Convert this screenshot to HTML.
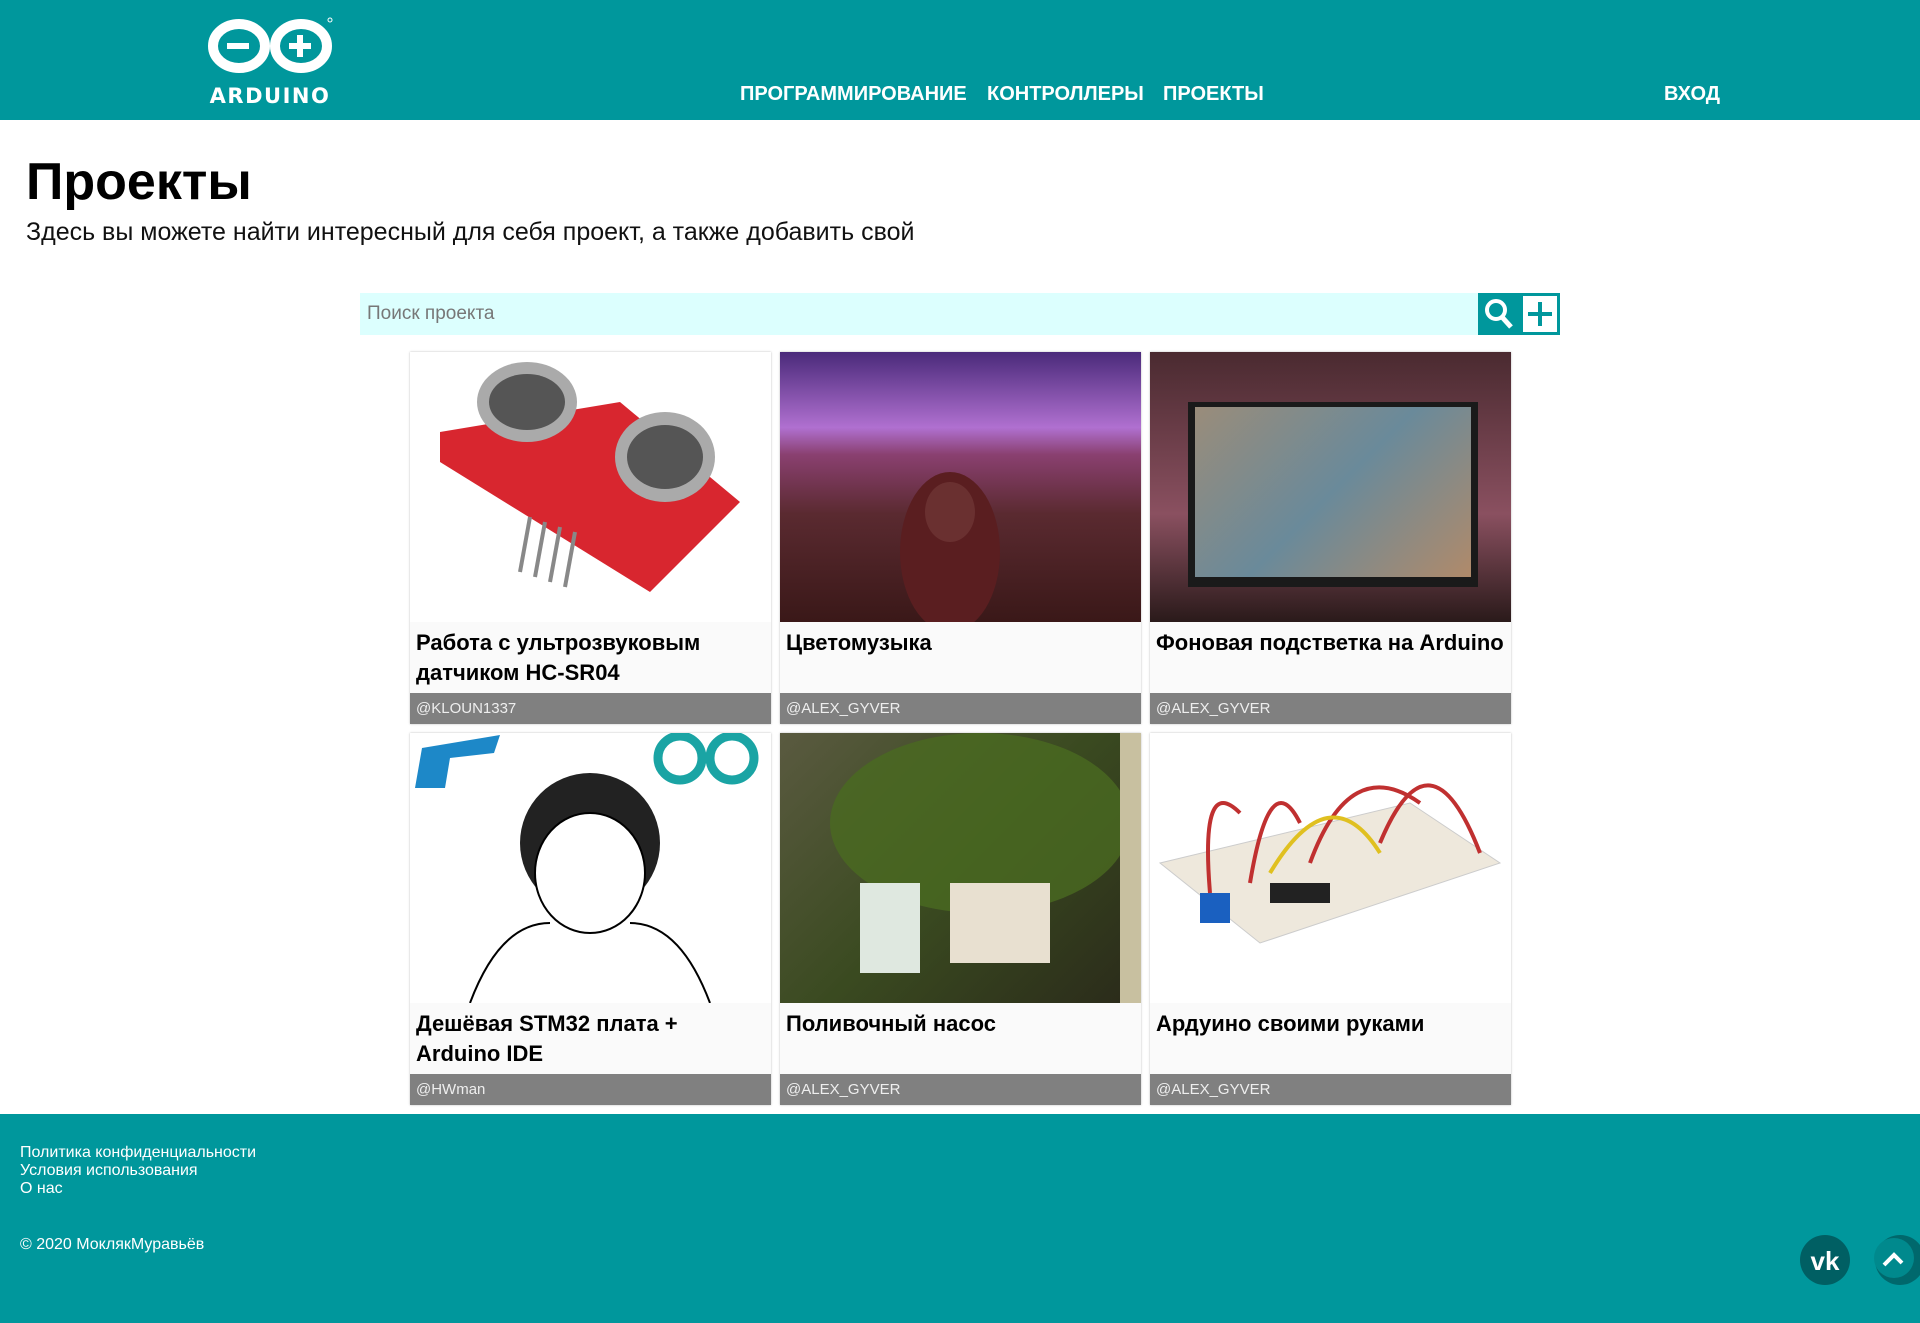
<!DOCTYPE html>
<html><head><meta charset="utf-8"><style>
*{margin:0;padding:0;box-sizing:border-box}
body{width:1920px;height:1323px;position:relative;background:#fff;font-family:"Liberation Sans","DejaVu Sans",sans-serif;overflow:hidden}
.hdr{position:absolute;left:0;top:0;width:1920px;height:120px;background:#00979c}
.nav{position:absolute;top:83px;color:#fff;font-weight:bold;font-size:20px;white-space:nowrap}
h1{position:absolute;left:26px;top:152px;font-size:52px;font-weight:bold;font-family:"Liberation Sans",sans-serif}
.sub{position:absolute;left:26px;top:218px;font-size:25px;font-family:"Liberation Sans",sans-serif;color:#111}
.search{position:absolute;left:360px;top:293px;width:1118px;height:42px;background:#dcfffe;color:#777;font-size:19px;padding:10px 7px}
.sb{position:absolute;left:1478px;top:293px;width:42px;height:42px;background:#00979c}
.pb{position:absolute;left:1520px;top:293px;width:40px;height:42px;background:#fff;border:3px solid #00979c}
.card{position:absolute;width:361px;height:372px;background:#fafafa;box-shadow:0 0 2px #bbb}
.card .img{position:absolute;left:0;top:0;width:361px;height:270px;overflow:hidden}
.card .t{position:absolute;left:6px;top:276px;width:355px;font-size:22px;line-height:30px;font-weight:bold;font-family:"Liberation Sans",sans-serif;color:#000}
.card .a{position:absolute;left:0;top:341px;width:361px;height:31px;background:#808080;color:#eee;font-size:15px;padding:7px 6px;font-family:"Liberation Sans",sans-serif}
.ftr{position:absolute;left:0;top:1114px;width:1920px;height:209px;background:#00979c;color:#fff;font-size:16px}
.ftr div{position:absolute;left:20px}
</style></head><body>
<div class="hdr">
<svg style="position:absolute;left:200px;top:10px" width="140" height="100" viewBox="0 0 140 100">
<ellipse cx="39" cy="36" rx="26" ry="22" fill="none" stroke="#fff" stroke-width="10"/>
<ellipse cx="101" cy="36" rx="26" ry="22" fill="none" stroke="#fff" stroke-width="10"/>
<rect x="27" y="33" width="22" height="6" fill="#fff"/>
<rect x="89" y="33" width="22" height="6" fill="#fff"/><rect x="97" y="25" width="6" height="22" fill="#fff"/>
<circle cx="130" cy="10" r="2" fill="none" stroke="#fff"/>
<text x="70" y="93" text-anchor="middle" fill="#fff" font-family="DejaVu Sans,sans-serif" font-weight="bold" font-size="21" letter-spacing="1.5">ARDUINO</text>
</svg>
<div class="nav" style="left:740px">ПРОГРАММИРОВАНИЕ</div>
<div class="nav" style="left:987px">КОНТРОЛЛЕРЫ</div>
<div class="nav" style="left:1163px">ПРОЕКТЫ</div>
<div class="nav" style="left:1664px">ВХОД</div>
</div>
<h1>Проекты</h1>
<div class="sub">Здесь вы можете найти интересный для себя проект, а также добавить свой</div>
<div class="search">Поиск проекта</div>
<div class="sb"><svg width="42" height="42"><circle cx="18" cy="17" r="9" fill="none" stroke="#fff" stroke-width="4"/><line x1="24" y1="24" x2="33" y2="34" stroke="#fff" stroke-width="5"/></svg></div>
<div class="pb"><svg width="34" height="36"><rect x="15" y="6" width="4" height="24" fill="#00979c"/><rect x="5" y="16" width="24" height="4" fill="#00979c"/></svg></div>

<div class="card" style="left:410px;top:352px"><div class="img" style="background:#fff"><svg width="361" height="270"><polygon points="30,80 210,50 330,150 240,240 30,110" fill="#d8262f"/><ellipse cx="117" cy="50" rx="50" ry="40" fill="#aaa"/><ellipse cx="117" cy="50" rx="38" ry="28" fill="#555"/><ellipse cx="255" cy="105" rx="50" ry="45" fill="#aaa"/><ellipse cx="255" cy="105" rx="38" ry="32" fill="#555"/><g stroke="#888" stroke-width="4"><line x1="120" y1="165" x2="110" y2="220"/><line x1="135" y1="170" x2="125" y2="225"/><line x1="150" y1="175" x2="140" y2="230"/><line x1="165" y1="180" x2="155" y2="235"/></g></svg></div><div class="t">Работа с ультрозвуковым датчиком HC-SR04</div><div class="a">@KLOUN1337</div></div>
<div class="card" style="left:780px;top:352px"><div class="img" style="background:linear-gradient(180deg,#4a2a7a 0%,#b070d0 28%,#8a4070 38%,#5a2a30 60%,#3a1818 100%)"><svg width="361" height="270"><ellipse cx="170" cy="200" rx="50" ry="80" fill="#5a1e20"/><ellipse cx="170" cy="160" rx="25" ry="30" fill="#6a3030"/></svg></div><div class="t">Цветомузыка</div><div class="a">@ALEX_GYVER</div></div>
<div class="card" style="left:1150px;top:352px"><div class="img" style="background:linear-gradient(180deg,#4a2a30,#8a5060 60%,#2a1a1a)"><div style="position:absolute;left:38px;top:50px;width:290px;height:185px;background:#1a1a1a"></div><div style="position:absolute;left:45px;top:55px;width:276px;height:170px;background:linear-gradient(135deg,#9a8c7a,#6a8a9a 50%,#b08a6a)"></div></div><div class="t">Фоновая подстветка на Arduino</div><div class="a">@ALEX_GYVER</div></div>

<div class="card" style="left:410px;top:733px"><div class="img" style="background:#fff"><svg width="361" height="270"><polygon points="12,15 90,2 84,20 40,25 35,55 5,55" fill="#1d88c8"/><ellipse cx="180" cy="110" rx="70" ry="70" fill="#222"/><ellipse cx="180" cy="140" rx="55" ry="60" fill="#fff" stroke="#000" stroke-width="2"/><path d="M60 270 Q90 190 140 190 M300 270 Q270 190 220 190" stroke="#000" fill="none" stroke-width="2"/><circle cx="270" cy="25" r="22" fill="none" stroke="#1aa4a4" stroke-width="9"/><circle cx="322" cy="25" r="22" fill="none" stroke="#1aa4a4" stroke-width="9"/></svg></div><div class="t">Дешёвая STM32 плата +<br>Arduino IDE</div><div class="a">@HWman</div></div>
<div class="card" style="left:780px;top:733px"><div class="img" style="background:linear-gradient(135deg,#5a5a40,#3a4a20 50%,#2a2a1a)"><svg width="361" height="270"><ellipse cx="200" cy="90" rx="150" ry="90" fill="#4a6a20" opacity=".8"/><rect x="170" y="150" width="100" height="80" fill="#e8e0d0"/><rect x="80" y="150" width="60" height="90" fill="#dfe8e0"/><rect x="340" y="0" width="21" height="270" fill="#c8c0a0"/></svg></div><div class="t">Поливочный насос</div><div class="a">@ALEX_GYVER</div></div>
<div class="card" style="left:1150px;top:733px"><div class="img" style="background:#fff"><svg width="361" height="270"><polygon points="10,130 260,70 350,130 110,210" fill="#eee8dc" stroke="#ccc"/><rect x="50" y="160" width="30" height="30" fill="#1a60c0"/><path d="M60 160 Q50 40 90 80 M100 150 Q120 30 150 90 M160 130 Q200 20 270 70 M230 110 Q280 -10 330 120" stroke="#c03030" stroke-width="4" fill="none"/><path d="M120 140 Q180 40 230 120" stroke="#e0c020" stroke-width="4" fill="none"/><rect x="120" y="150" width="60" height="20" fill="#222"/></svg></div><div class="t">Ардуино своими руками</div><div class="a">@ALEX_GYVER</div></div>

<div class="ftr">
<div style="top:30px">Политика конфиденциальности</div>
<div style="top:48px">Условия использования</div>
<div style="top:66px">О нас</div>
<div style="top:122px">© 2020 МоклякМуравьёв</div>
<svg style="position:absolute;left:1798px;top:118px" width="122" height="56"><circle cx="27" cy="28" r="25" fill="#005f63"/><text x="27" y="38" text-anchor="middle" fill="#fff" font-weight="bold" font-size="26" font-family="Liberation Sans">vk</text><circle cx="102" cy="28" r="25" fill="#00686c"/><circle cx="96" cy="26" r="20" fill="#00898d"/><path d="M86 33 L96 23 L104 31" stroke="#fff" stroke-width="4" fill="none"/></svg>
</div>
</body></html>
